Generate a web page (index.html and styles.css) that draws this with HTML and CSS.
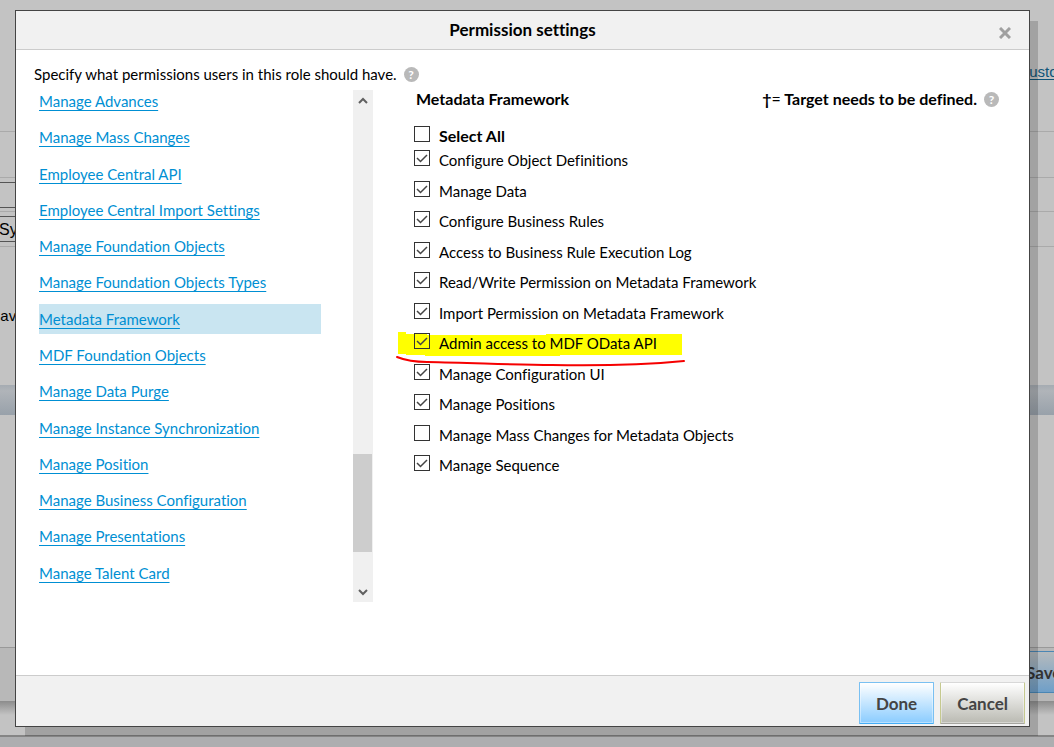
FILE: index.html
```html
<!DOCTYPE html>
<html lang="en">
<head>
    <meta charset="UTF-8">
    <meta name="viewport" content="width=device-width, initial-scale=1.0">
    <title>Permission settings</title>
    <link rel="stylesheet" href="styles.css">
</head>
<body>
    <div class="page">
        <div class="page-top">
            <a class="page-link" href="#">Custom</a>
        </div>
        <div class="page-row"></div>
        <div class="page-row page-field">
            <input type="text" class="page-input" aria-label="Role name">
        </div>
        <div class="page-row page-field">
            <select class="page-select" aria-label="Owner"><option>Sy</option></select>
        </div>
        <p class="page-text">hav</p>
        <div class="page-band"></div>
        <div class="page-body"></div>
        <div class="page-actions">
            <button class="page-save" type="button">Save</button>
        </div>
        <div class="page-shadow"></div>
        <div class="page-footer"></div>
    </div>

    <div class="dialog" role="dialog" aria-labelledby="dialog-title">
        <header class="dialog-header">
            <h1 id="dialog-title">Permission settings</h1>
            <button class="close" type="button" aria-label="Close">
                <svg width="12" height="12" viewBox="0 0 12 12"><path d="M1 1l10 10M11 1l-10 10" stroke="#a0a0a0" stroke-width="3" fill="none"/></svg>
            </button>
        </header>

        <main class="dialog-body">
            <p class="intro">Specify what permissions users in this role should have. <button class="help" type="button">?</button></p>
            <div class="columns">
                <nav class="categories">
                    <ul class="category-list">
                        <li><a href="#">Manage Advances</a></li>
                        <li><a href="#">Manage Mass Changes</a></li>
                        <li><a href="#">Employee Central API</a></li>
                        <li><a href="#">Employee Central Import Settings</a></li>
                        <li><a href="#">Manage Foundation Objects</a></li>
                        <li><a href="#">Manage Foundation Objects Types</a></li>
                        <li class="active"><a href="#">Metadata Framework</a></li>
                        <li><a href="#">MDF Foundation Objects</a></li>
                        <li><a href="#">Manage Data Purge</a></li>
                        <li><a href="#">Manage Instance Synchronization</a></li>
                        <li><a href="#">Manage Position</a></li>
                        <li><a href="#">Manage Business Configuration</a></li>
                        <li><a href="#">Manage Presentations</a></li>
                        <li><a href="#">Manage Talent Card</a></li>
                    </ul>
                    <div class="scrollbar">
                        <button type="button" aria-label="Scroll up">
                            <svg width="10" height="8" viewBox="0 0 10 8"><path d="M1 6l4-4 4 4" stroke="#606060" stroke-width="2" fill="none"/></svg>
                        </button>
                        <div class="track"><div class="thumb"></div></div>
                        <button type="button" aria-label="Scroll down">
                            <svg width="10" height="8" viewBox="0 0 10 8"><path d="M1 2l4 4 4-4" stroke="#606060" stroke-width="2" fill="none"/></svg>
                        </button>
                    </div>
                </nav>

                <section class="permissions">
                    <div class="permissions-head">
                        <h2>Metadata Framework</h2>
                        <p class="target"><span>†<span class="equals">=</span> Target needs to be defined.</span> <button class="help" type="button">?</button></p>
                    </div>
                    <label class="check select-all"><input type="checkbox"><span>Select All</span></label>
                    <ul class="check-list">
                        <li><label class="check"><input type="checkbox" checked><span>Configure Object Definitions</span></label></li>
                        <li><label class="check"><input type="checkbox" checked><span>Manage Data</span></label></li>
                        <li><label class="check"><input type="checkbox" checked><span>Configure Business Rules</span></label></li>
                        <li><label class="check"><input type="checkbox" checked><span>Access to Business Rule Execution Log</span></label></li>
                        <li><label class="check"><input type="checkbox" checked><span>Read/Write Permission on Metadata Framework</span></label></li>
                        <li><label class="check"><input type="checkbox" checked><span>Import Permission on Metadata Framework</span></label></li>
                        <li class="marked">
                            <svg class="marker" width="292" height="40" viewBox="0 0 292 40">
                                <path d="M2 2h8v2h21v1h119v-1h136v21h-122v1h-135v-1h-19v-1h-8z" fill="#ffff00"/>
                                <path d="M1 27c10 4 18 5 30 5 50 1 90 3 125 3 50 1 90 0 132-4" stroke="#f60000" stroke-width="2" stroke-linecap="round" fill="none"/>
                            </svg>
                            <label class="check"><input type="checkbox" checked><span>Admin access to MDF OData API</span></label>
                        </li>
                        <li><label class="check"><input type="checkbox" checked><span>Manage Configuration UI</span></label></li>
                        <li><label class="check"><input type="checkbox" checked><span>Manage Positions</span></label></li>
                        <li><label class="check"><input type="checkbox"><span>Manage Mass Changes for Metadata Objects</span></label></li>
                        <li><label class="check"><input type="checkbox" checked><span>Manage Sequence</span></label></li>
                    </ul>
                </section>
            </div>
        </main>

        <footer class="dialog-footer">
            <button class="btn btn-primary" type="button">Done</button>
            <button class="btn" type="button">Cancel</button>
        </footer>
    </div>
</body>
</html>
```

FILE: styles.css
```css
:root {
    --link: #008fd3;
    --bar: #f1f1f1;
    --line: #cccccc;
    --page-line: #aaaaaa;
}

* {
    margin: 0;
    padding: 0;
    box-sizing: border-box;
}

body {
    font-family: "Lato", sans-serif;
    font-size: 15px;
    font-variant-ligatures: none;
    line-height: 20px;
    color: #000;
    overflow: hidden;
}

ul {
    list-style: none;
}

button {
    font-family: inherit;
    cursor: pointer;
}

/* page behind the dialog */
.page {
    display: flex;
    flex-direction: column;
    height: 100vh;
    min-height: 640px;
    background: #c3c3c3;
    font-family: "Liberation Sans", sans-serif;
    overflow: hidden;
}

.page-top {
    height: 132px;
    padding-top: 62px;
    border-bottom: 1px solid var(--page-line);
    display: flex;
    justify-content: flex-end;
    align-items: flex-start;
}

.page-link {
    color: #0f5478;
    margin-right: -16px;
    text-underline-offset: 2px;
}

.page-row {
    height: 46px;
    border-bottom: 1px solid var(--page-line);
}

.page-field {
    display: flex;
    align-items: center;
    height: 34px;
}

.page-field + .page-field {
    height: 35px;
}

.page-input,
.page-select {
    width: 200px;
    height: 26px;
    margin-left: -2px;
    background: #c3c3c3;
    border: 1px solid #555;
    font-family: inherit;
    font-size: 16px;
    color: #000;
    appearance: none;
}

.page-text {
    height: 138px;
    padding-top: 59px;
    margin-left: -8px;
}

.page-band {
    height: 30px;
    background: linear-gradient(#a5abb2, #b0b4b9 20%, #98a1aa);
}

.page-body {
    flex: 1;
    border-bottom: 1px solid #999;
}

.page-actions {
    display: flex;
    justify-content: flex-end;
    height: 53px;
    padding-top: 3px;
    background: #b8b8b8;
}

.page-save {
    width: 90px;
    height: 42px;
    margin-right: -49px;
    padding-left: 12px;
    text-align: left;
    border: 1px solid #4a86b4;
    background: linear-gradient(#b5babd, #6f9fc8);
    font-family: "Lato", sans-serif;
    font-size: 17px;
    font-weight: bold;
    color: #333;
}

.page-shadow {
    height: 34px;
    background: linear-gradient(#8c8c8c, #c3c3c3 14px);
}

.page-footer {
    height: 12px;
    border-top: 2px solid #858585;
    background: #adaeb0;
}

/* dialog */
.dialog {
    position: absolute;
    inset: 10px 24px 20px 15px;
    min-height: 620px;
    display: flex;
    flex-direction: column;
    background: #fff;
    border: 1px solid #444;
    box-shadow: 9px 10px 0 -1px rgba(0, 0, 0, 0.17);
}

.dialog-header {
    display: grid;
    grid-template-columns: 1fr auto 1fr;
    align-items: center;
    height: 39px;
    padding: 0 18px;
    background: var(--bar);
    border-bottom: 1px solid var(--line);
}

.dialog-header h1 {
    grid-column: 2;
    font-size: 17px;
}

.close {
    justify-self: end;
    display: flex;
    padding-top: 6px;
    border: 0;
    background: none;
}

.dialog-body {
    flex: 1;
    padding: 14px 18px 0;
}

.intro,
.target {
    display: flex;
    align-items: center;
    gap: 7px;
}

.help {
    width: 15px;
    height: 15px;
    border: 0;
    border-radius: 50%;
    background: #b9b9b9;
    color: #fff;
    font-size: 12px;
    font-weight: bold;
    line-height: 15px;
    text-align: center;
}

.columns {
    display: flex;
    gap: 41px;
    padding-top: 2px;
}

.categories {
    display: flex;
    gap: 32px;
    padding-left: 5px;
}

.category-list {
    display: grid;
    grid-auto-rows: 1fr;
    width: 282px;
    height: 508px;
}

.category-list li {
    line-height: 30px;
}

.category-list a {
    display: block;
    height: 30px;
    color: var(--link);
    text-underline-offset: 3px;
    text-decoration-skip-ink: none;
}

.category-list .active a {
    background: #c9e5f1;
}

.scrollbar {
    display: flex;
    flex-direction: column;
    width: 20px;
    height: 512px;
    margin-top: 4px;
    background: #f0f0f0;
}

.scrollbar button {
    display: flex;
    align-items: center;
    justify-content: center;
    height: 21px;
    border: 0;
    background: none;
}

.track {
    flex: 1;
    display: flex;
    flex-direction: column;
    justify-content: flex-end;
    padding: 0 1px 29px 0;
}

.thumb {
    height: 98px;
    background: #cdcdcd;
}

.permissions {
    flex: 1;
    padding-top: 3px;
}

.permissions-head {
    display: flex;
    justify-content: space-between;
    padding: 0 12px 0 2px;
    font-size: 16px;
    font-weight: bold;
}

.permissions-head h2 {
    font-size: 16px;
}

.equals {
    font-weight: normal;
}

.check {
    display: flex;
    gap: 9px;
}

.check input {
    appearance: none;
    width: 16px;
    height: 16px;
    border: 1px solid #333;
}

.check input:checked {
    background: url("data:image/svg+xml,%3Csvg xmlns='http://www.w3.org/2000/svg' viewBox='0 0 14 14'%3E%3Cpath d='M2 7l3.500 3.500L12 4' fill='none' stroke='%23444' stroke-width='1.500'/%3E%3C/svg%3E");
}

.select-all {
    height: 24px;
    margin-top: 17px;
    font-size: 16px;
    font-weight: bold;
}

.check-list {
    display: grid;
    grid-auto-rows: 1fr;
    height: 336px;
}

.marked {
    position: relative;
    isolation: isolate;
}

.marker {
    position: absolute;
    left: -18px;
    top: -3px;
    z-index: -1;
}

.dialog-footer {
    display: flex;
    justify-content: flex-end;
    gap: 6px;
    height: 51px;
    padding: 6px 4px 2px;
    background: var(--bar);
    border-top: 1px solid var(--line);
}

.btn {
    height: 42px;
    padding: 0 16px;
    border: 1px solid #c5c98f;
    border-top-color: #d8d8d8;
    border-bottom-color: #a5a5a0;
    border-radius: 1px;
    box-shadow: inset 0 0 0 1px rgba(255, 255, 255, 0.4);
    background: linear-gradient(#fff, #babab2);
    font-size: 17px;
    font-weight: bold;
    color: #444;
}

.btn-primary {
    border-color: #79c0f2;
    border-bottom-color: #43adf7;
    background: linear-gradient(#fff, #8accff);
}
```
